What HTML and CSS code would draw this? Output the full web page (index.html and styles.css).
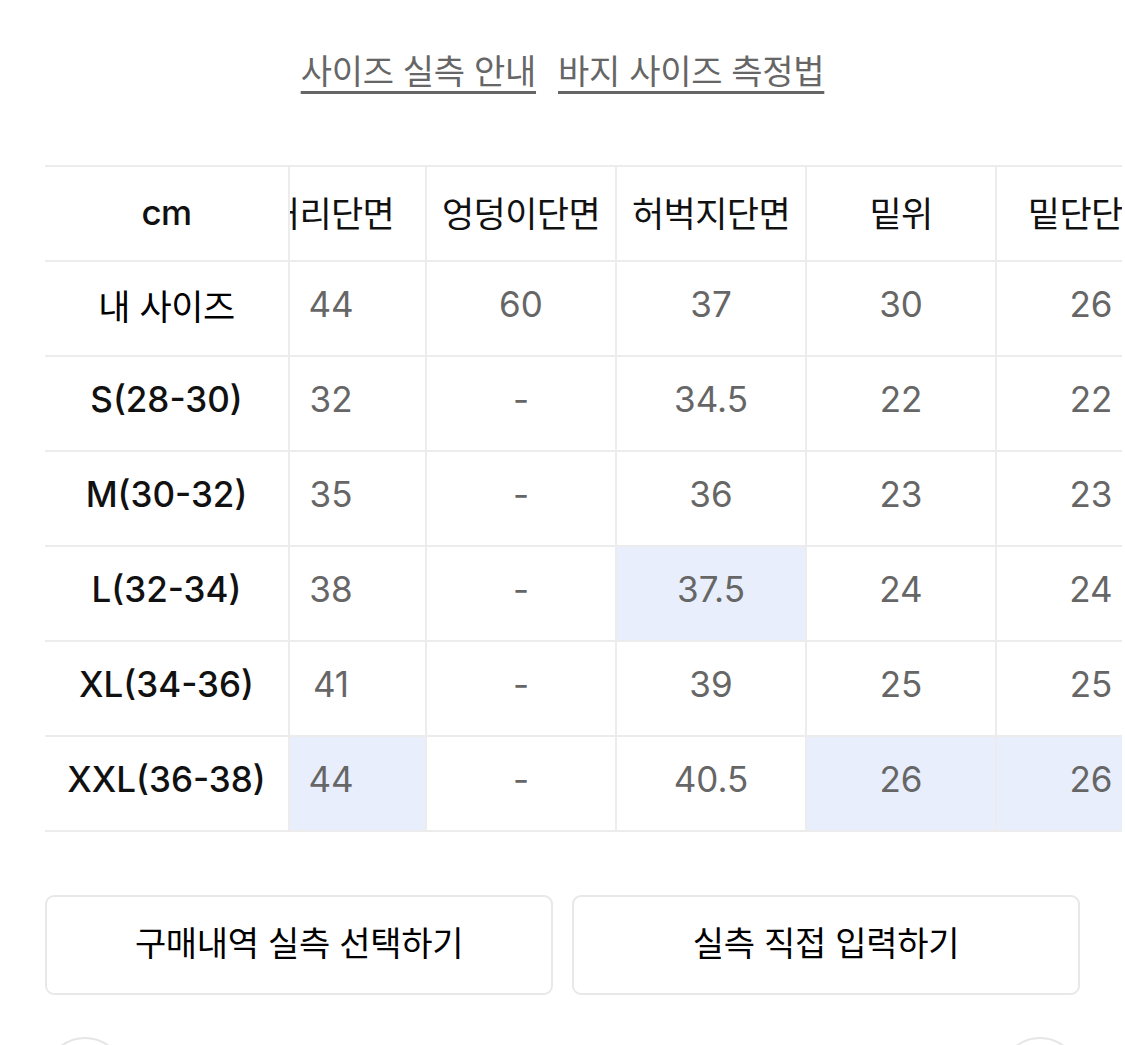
FILE: index.html
```html
<!DOCTYPE html>
<html lang="ko">
<head>
<meta charset="utf-8">
<title>사이즈 실측</title>
<link rel="stylesheet" href="styles.css">
</head>
<body>
<div class="page">
  <nav class="links">
    <a class="link" href="#">사이즈 실측 안내</a>
    <a class="link" href="#">바지 사이즈 측정법</a>
  </nav>

  <div class="size-table">
    <div class="fixed">
      <div class="cell head">cm</div>
      <div class="cell label ko">내 사이즈</div>
      <div class="cell label">S(28-30)</div>
      <div class="cell label">M(30-32)</div>
      <div class="cell label">L(32-34)</div>
      <div class="cell label">XL(34-36)</div>
      <div class="cell label">XXL(36-38)</div>
    </div>
    <div class="scroll">
      <div class="grid">
        <div class="cell head">허리단면</div>
        <div class="cell head">엉덩이단면</div>
        <div class="cell head">허벅지단면</div>
        <div class="cell head">밑위</div>
        <div class="cell head">밑단단면</div>
        <div class="cell head">총장</div>

        <div class="cell val">44</div>
        <div class="cell val">60</div>
        <div class="cell val">37</div>
        <div class="cell val">30</div>
        <div class="cell val">26</div>
        <div class="cell val">100</div>

        <div class="cell val">32</div>
        <div class="cell val">-</div>
        <div class="cell val">34.5</div>
        <div class="cell val">22</div>
        <div class="cell val">22</div>
        <div class="cell val">-</div>

        <div class="cell val">35</div>
        <div class="cell val">-</div>
        <div class="cell val">36</div>
        <div class="cell val">23</div>
        <div class="cell val">23</div>
        <div class="cell val">-</div>

        <div class="cell val">38</div>
        <div class="cell val">-</div>
        <div class="cell val hl">37.5</div>
        <div class="cell val">24</div>
        <div class="cell val">24</div>
        <div class="cell val">-</div>

        <div class="cell val">41</div>
        <div class="cell val">-</div>
        <div class="cell val">39</div>
        <div class="cell val">25</div>
        <div class="cell val">25</div>
        <div class="cell val">-</div>

        <div class="cell val hl">44</div>
        <div class="cell val">-</div>
        <div class="cell val">40.5</div>
        <div class="cell val hl">26</div>
        <div class="cell val hl">26</div>
        <div class="cell val">-</div>
      </div>
    </div>
  </div>

  <div class="actions">
    <button class="btn" type="button">구매내역 실측 선택하기</button>
    <button class="btn" type="button">실측 직접 입력하기</button>
  </div>

  <div class="pager">
    <span class="circle"></span>
    <span class="circle"></span>
  </div>
</div>
</body>
</html>
```

FILE: styles.css
```css
html, body {
  margin: 0;
  padding: 0;
  background: #ffffff;
}

body {
  font-family: "Inter", "Noto Sans CJK KR", sans-serif;
  color: #111111;
  overflow: hidden;
}

.page {
  padding: 0 45px;
  height: 1045px;
  overflow: hidden;
}

.links {
  display: flex;
  justify-content: center;
  gap: 22px;
  padding-top: 46px;
  height: 165px;
  box-sizing: border-box;
}

.link {
  font-family: "Noto Sans CJK KR", sans-serif;
  font-size: 34px;
  line-height: 48px;
  color: #666666;
  text-decoration: underline;
  text-decoration-thickness: 3px;
  text-underline-offset: 7px;
  letter-spacing: -0.3px;
}

.size-table {
  display: flex;
  margin-right: -42px;
  border-top: 2px solid #ececec;
}

.fixed {
  flex: 0 0 245px;
  box-sizing: border-box;
  border-right: 2px solid #ececec;
}

.scroll {
  flex: 1;
  overflow: hidden;
}

.grid {
  display: grid;
  grid-template-columns: repeat(6, 190px);
  margin-left: -55px;
  width: 1140px;
}

.cell {
  height: 95px;
  box-sizing: border-box;
  border-bottom: 2px solid #ececec;
  display: flex;
  align-items: center;
  justify-content: center;
  font-size: 35px;
  white-space: nowrap;
  overflow: hidden;
  padding-bottom: 9px;
}

.grid .cell {
  border-left: 2px solid #ececec;
}

.head {
  color: #111111;
  font-family: "Noto Sans CJK KR", sans-serif;
  letter-spacing: -0.6px;
  padding-bottom: 4px;
}

.fixed .head {
  font-family: "Inter", "Noto Sans CJK KR", sans-serif;
  font-weight: 500;
}

.label {
  color: #111111;
  font-weight: 500;
}

.label.ko {
  font-family: "Noto Sans CJK KR", sans-serif;
  font-weight: 400;
  color: #000000;
  letter-spacing: -0.4px;
}

.val {
  color: #666666;
}

.hl {
  background: #e8eefb;
}

.actions {
  display: flex;
  gap: 19px;
  margin-top: 63px;
}

.btn {
  flex: 1;
  height: 100px;
  background: #ffffff;
  border: 2px solid #e8e8e8;
  border-radius: 9px;
  font-family: "Noto Sans CJK KR", sans-serif;
  font-size: 34px;
  font-weight: 400;
  color: #000000;
  letter-spacing: -0.3px;
  padding: 0 0 8px;
}

.pager {
  display: flex;
  justify-content: space-between;
  margin-top: 42px;
}

.circle {
  width: 80px;
  height: 80px;
  box-sizing: border-box;
  border: 2px solid #e6e6e6;
  border-radius: 50%;
}
```
